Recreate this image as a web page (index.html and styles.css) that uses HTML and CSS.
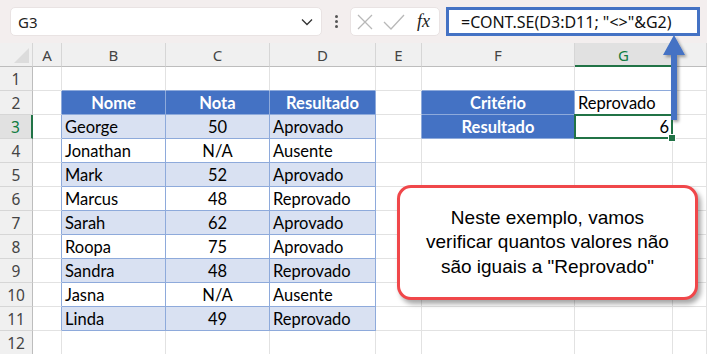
FILE: index.html
```html
<!DOCTYPE html>
<html lang="pt">
<head>
<meta charset="utf-8">
<title>CONT.SE</title>
<link rel="stylesheet" href="styles.css">
</head>
<body>
<div class="topbar">
  <div class="namebox"><span>G3</span>
    <svg class="chev" width="12" height="8" viewBox="0 0 12 8"><path d="M1 1.5 L6 6.5 L11 1.5" fill="none" stroke="#333" stroke-width="1.3"/></svg>
  </div>
  <div class="dots"><span></span><span></span><span></span></div>
  <div class="fxgroup">
    <svg width="18" height="18" viewBox="0 0 18 18"><path d="M2 2 L16 16 M16 2 L2 16" stroke="#b8b8b8" stroke-width="1.3" fill="none"/></svg>
    <svg width="22" height="18" viewBox="0 0 22 18"><path d="M1 9 L8 16 L21 2" stroke="#b8b8b8" stroke-width="1.3" fill="none"/></svg>
    <span class="fx">fx</span>
  </div>
  <div class="formula">=CONT.SE(D3:D11; "&lt;&gt;"&amp;G2)</div>
</div>

<div class="sheet">
  <div class="row colhdr">
    <div class="corner"><span class="tri"></span></div>
    <div>A</div><div>B</div><div>C</div><div>D</div><div>E</div><div>F</div><div class="sel">G</div><div></div>
  </div>
  <div class="row">
    <div class="rh">1</div><div></div><div class="top"></div><div class="top"></div><div class="top"></div><div></div><div class="top"></div><div class="top"></div><div></div>
  </div>
  <div class="row">
    <div class="rh">2</div><div class="edge"></div>
    <div class="th">Nome</div><div class="th">Nota</div><div class="th">Resultado</div>
    <div class="edge"></div>
    <div class="th">Critério</div><div class="tb">Reprovado</div><div></div>
  </div>
  <div class="row">
    <div class="rh rsel">3</div><div class="edge"></div>
    <div class="tb band">George</div><div class="tb band ctr">50</div><div class="tb band">Aprovado</div>
    <div class="edge"></div>
    <div class="th">Resultado</div><div class="tb rt active">6</div><div></div>
  </div>
  <div class="row">
    <div class="rh">4</div><div class="edge"></div>
    <div class="tb">Jonathan</div><div class="tb ctr">N/A</div><div class="tb">Ausente</div>
    <div></div><div></div><div></div><div></div>
  </div>
  <div class="row">
    <div class="rh">5</div><div class="edge"></div>
    <div class="tb band">Mark</div><div class="tb band ctr">52</div><div class="tb band">Aprovado</div>
    <div></div><div></div><div></div><div></div>
  </div>
  <div class="row">
    <div class="rh">6</div><div class="edge"></div>
    <div class="tb">Marcus</div><div class="tb ctr">48</div><div class="tb">Reprovado</div>
    <div></div><div></div><div></div><div></div>
  </div>
  <div class="row">
    <div class="rh">7</div><div class="edge"></div>
    <div class="tb band">Sarah</div><div class="tb band ctr">62</div><div class="tb band">Aprovado</div>
    <div></div><div></div><div></div><div></div>
  </div>
  <div class="row">
    <div class="rh">8</div><div class="edge"></div>
    <div class="tb">Roopa</div><div class="tb ctr">75</div><div class="tb">Aprovado</div>
    <div></div><div></div><div></div><div></div>
  </div>
  <div class="row">
    <div class="rh">9</div><div class="edge"></div>
    <div class="tb band">Sandra</div><div class="tb band ctr">48</div><div class="tb band">Reprovado</div>
    <div></div><div></div><div></div><div></div>
  </div>
  <div class="row">
    <div class="rh">10</div><div class="edge"></div>
    <div class="tb">Jasna</div><div class="tb ctr">N/A</div><div class="tb">Ausente</div>
    <div></div><div></div><div></div><div></div>
  </div>
  <div class="row">
    <div class="rh">11</div><div class="edge"></div>
    <div class="tb band">Linda</div><div class="tb band ctr">49</div><div class="tb band">Reprovado</div>
    <div></div><div></div><div></div><div></div>
  </div>
  <div class="row">
    <div class="rh">12</div><div></div><div></div><div></div><div></div><div></div><div></div><div></div><div></div>
  </div>
</div>

<svg class="arrow" width="34" height="92" viewBox="0 0 34 92">
  <defs>
    <filter id="sh" x="-50%" y="-20%" width="200%" height="140%">
      <feDropShadow dx="2" dy="2" stdDeviation="1.5" flood-color="#000" flood-opacity="0.35"/>
    </filter>
  </defs>
  <path d="M14 2 L25 22 L17 22 L17 87 L11 87 L11 22 L3 22 Z" fill="#4472c4" filter="url(#sh)"/>
</svg>

<div class="callout">Neste exemplo, vamos<br>verificar quantos valores não<br>são iguais a "Reprovado"</div>
</body>
</html>
```

FILE: styles.css
```css
* { box-sizing: border-box; margin: 0; padding: 0; }

body {
  width: 707px;
  height: 354px;
  overflow: hidden;
  background: #fff;
  position: relative;
  font-family: Lato, "Liberation Sans", sans-serif;
}

/* ---------- formula bar ---------- */
.topbar {
  height: 43px;
  background: #f3eeee;
  display: flex;
  align-items: center;
  padding-left: 10px;
}

.namebox {
  width: 312px;
  height: 29px;
  background: #fff;
  border: 1px solid #e9e3e3;
  border-radius: 5px;
  display: flex;
  align-items: center;
  justify-content: space-between;
  padding: 0 8px 0 7px;
  font: 15px "Noto Sans", sans-serif;
  color: #222;
}

.dots {
  width: 28px;
  display: flex;
  flex-direction: column;
  align-items: center;
  gap: 2px;
}
.dots span {
  width: 3px;
  height: 3px;
  background: #555;
  border-radius: 50%;
}

.fxgroup {
  width: 90px;
  height: 29px;
  background: #fff;
  border: 1px solid #e9e3e3;
  border-radius: 5px;
  display: flex;
  align-items: center;
  padding: 0 5px;
  gap: 9px;
}
.fx {
  font: italic 18px "Liberation Serif", serif;
  color: #222;
  margin-left: 3px;
}

.formula {
  margin-left: 6px;
  width: 254px;
  height: 29px;
  border: 3px solid #4472c4;
  background: #fff;
  display: flex;
  align-items: center;
  padding-left: 12px;
  font: 16px "Noto Sans", sans-serif;
  color: #111;
  white-space: nowrap;
}

/* ---------- sheet ---------- */
.row {
  display: grid;
  grid-template-columns: 33px 29px 104px 104px 106px 46px 153px 98px 34px;
  height: 24px;
}
.row > div {
  border-right: 1px solid #e2e2e2;
  border-bottom: 1px solid #e2e2e2;
  display: flex;
  align-items: center;
  padding: 1px 3px 0;
  white-space: nowrap;
  font-size: 16.5px;
  color: #000;
}

.colhdr > div {
  background: #f0f0f0;
  border-right-color: #d6d6d6;
  border-bottom-color: #bdbdbd;
  justify-content: center;
  font: 15px "Noto Sans", sans-serif;
  color: #444;
}
.colhdr > .sel {
  background: #e1e1e1;
  color: #107c41;
  border-bottom: 2px solid #217346;
}
.corner {
  position: relative;
}
.tri {
  position: absolute;
  right: 3px;
  bottom: 3px;
  width: 15px;
  height: 15px;
  background: #dcdcdc;
  clip-path: polygon(100% 0, 100% 100%, 0 100%);
}

.row > .rh {
  background: #f0f0f0;
  border-right-color: #bdbdbd;
  border-bottom-color: #d6d6d6;
  justify-content: center;
  font: 15.5px "Noto Sans", sans-serif;
  color: #444;
}
.row > .rsel {
  background: #e1e1e1;
  color: #107c41;
  border-right: 2px solid #217346;
}

.row > .edge { border-right-color: #8eaadb; }
.row > .top { border-bottom-color: #8eaadb; }

.row > .th {
  background: #4472c4;
  color: #fff;
  font-weight: bold;
  justify-content: center;
  border-right-color: #8eaadb;
  border-bottom-color: #8eaadb;
}
.row > .tb {
  border-right-color: #8eaadb;
  border-bottom-color: #8eaadb;
}
.row > .band { background: #d9e1f2; }
.row > .ctr { justify-content: center; }
.row > .rt { justify-content: flex-end; }

.active { position: relative; }
.active::before {
  content: "";
  position: absolute;
  left: -1px;
  top: -1px;
  right: -1px;
  bottom: -1px;
  border: 2px solid #217346;
}
.active::after {
  content: "";
  position: absolute;
  right: -4px;
  bottom: -4px;
  width: 6px;
  height: 6px;
  background: #217346;
  border: 1px solid #fff;
}

/* ---------- overlays ---------- */
.arrow {
  position: absolute;
  left: 660px;
  top: 33px;
}

.callout {
  position: absolute;
  left: 397px;
  top: 185px;
  width: 301px;
  height: 115px;
  border: 3px solid #f0474a;
  border-radius: 14px;
  background: #fff;
  box-shadow: 3px 4px 5px rgba(0, 0, 0, 0.35);
  display: flex;
  align-items: center;
  justify-content: center;
  text-align: center;
  font: 19px/24.5px "Liberation Sans", Arial, sans-serif;
  color: #000;
}
```
